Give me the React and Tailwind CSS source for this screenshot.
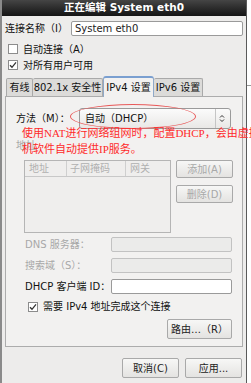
import React from 'react'

const ui = { fontFamily: '"DejaVu Sans", "Noto Sans CJK SC", sans-serif' }
const red = { fontFamily: '"Liberation Serif", "Noto Sans CJK SC", serif' }

function Check({ checked }) {
  return (
    <span className="w-[10px] h-[10px] border border-[#8c8c8c] bg-white flex items-center justify-center shrink-0">
      {checked && (
        <svg width="8" height="8" viewBox="0 0 8 8">
          <path d="M1 4.2 L3 6.3 L7 1.3" fill="none" stroke="#333" strokeWidth="1.3" />
        </svg>
      )}
    </span>
  )
}

function Btn({ children, disabled, className }) {
  return (
    <div
      className={`flex items-center justify-center border border-[#a9a9a9] rounded-[2px] bg-gradient-to-b from-[#f7f7f6] to-[#e4e3e1] text-[10px] ${disabled ? 'text-[#a8a8a8]' : 'text-[#222]'} ${className}`}
    >
      {children}
    </div>
  )
}

function Field({ label, disabled, top }) {
  return (
    <div className={`flex items-center h-[15px] ${top}`}>
      <span className={`w-[105px] shrink-0 pl-[19px] text-[10px] whitespace-nowrap ${disabled ? 'text-[#a8a8a8]' : 'text-[#111]'}`}>{label}</span>
      <div className={`w-[121px] shrink-0 h-[15px] border rounded-[2px] ${disabled ? 'border-[#c2c2c2] bg-[#ebebea]' : 'border-[#9a9a9a] bg-white'}`} />
    </div>
  )
}

export default function App() {
  return (
    <div className="w-[251px] h-[383px] flex bg-white overflow-hidden relative" style={ui}>
      <div className="w-[247px] shrink-0 h-full flex flex-col bg-[#edeceb] border-l-2 border-[#8a8a8a] border-r border-r-[#5a5a5a]">
        {/* title */}
        <div className="h-[16px] bg-gradient-to-b from-[#454545] to-[#151515] text-white text-[10.5px] font-bold flex items-center justify-center">
          正在编辑 System eth0
        </div>

        {/* connection name */}
        <div className="flex items-center mt-[5px] h-[15px] pl-[3px]">
          <span className="w-[66px] shrink-0 text-[10px] text-[#111] whitespace-nowrap">连接名称（I）</span>
          <div className="w-[172px] shrink-0 h-[15px] border border-[#9a9a9a] rounded-[2px] bg-white text-[10px] text-[#222] pl-[3px] leading-[13px]">System eth0</div>
        </div>

        <div className="flex items-center gap-[5px] mt-[7px] pl-[6px] h-[12px] text-[10px] text-[#111]">
          <Check />
          <span>自动连接（A）</span>
        </div>
        <div className="flex items-center gap-[5px] mt-[4px] pl-[6px] h-[12px] text-[10px] text-[#111]">
          <Check checked />
          <span>对所有用户可用</span>
        </div>

        {/* tabs */}
        <div className="flex items-end mt-[5px] pl-[4px] h-[20px] text-[10px] text-[#111]">
          <div className="w-[27px] h-[18px] border border-[#a9a9a9] border-b-0 rounded-t-[2px] bg-[#dcdbd9] flex items-center justify-center">有线</div>
          <div className="w-[70px] h-[18px] border border-[#a9a9a9] border-b-0 border-l-0 rounded-t-[2px] bg-[#dcdbd9] flex items-center justify-center">802.1x 安全性</div>
          <div className="w-[51px] h-[21px] border border-[#8fa9c9] border-b-0 border-t-2 border-t-[#7a9fd0] rounded-t-[3px] bg-[#f2f1f0] flex items-center justify-center relative z-10 -mb-px">IPv4 设置</div>
          <div className="w-[49px] h-[18px] border border-[#a9a9a9] border-b-0 border-l-0 rounded-t-[2px] bg-[#dcdbd9] flex items-center justify-center">IPv6 设置</div>
        </div>

        {/* panel */}
        <div className="ml-[3px] w-[238px] h-[251px] border border-[#acacac] bg-[#f2f1f0] flex flex-col">
          <div className="flex items-center mt-[11px] h-[21px]">
            <span className="w-[73px] shrink-0 pl-[10px] text-[10px] text-[#111] whitespace-nowrap">方法（M）：</span>
            <div className="w-[152px] shrink-0 h-[21px] border border-[#9a9a9a] rounded-[3px] bg-gradient-to-b from-[#fbfbfb] to-[#e9e8e6] flex items-center justify-between px-[5px] text-[10px] text-[#111]">
              <span>自动（DHCP）</span>
              <div className="flex items-center h-full border-l border-[#c5c5c5] pl-[3px]">
                <svg width="6" height="9" viewBox="0 0 6 9">
                  <path d="M1 3.5 L3 1.5 L5 3.5 M1 5.5 L3 7.5 L5 5.5" fill="none" stroke="#333" strokeWidth="1" />
                </svg>
              </div>
            </div>
          </div>

          <div className="mt-[11px] pl-[10px] text-[10px] text-[#a8a8a8] h-[12px] leading-[12px]">地址</div>

          <div className="flex mt-[8px] pl-[18px] gap-[5px]">
            <div className="w-[147px] shrink-0 h-[73px] border border-[#b5b5b5] bg-[#efeeed]">
              <div className="h-[16px] flex items-center border-b border-[#c8c8c8] text-[10px] text-[#b0b0b0]">
                <span className="w-[42px] pl-[4px] border-r border-[#cfcfcf]">地址</span>
                <span className="w-[59px] pl-[3px] border-r border-[#cfcfcf]">子网掩码</span>
                <span className="pl-[4px]">网关</span>
              </div>
            </div>
            <div className="flex flex-col gap-[7px]">
              <Btn disabled className="w-[57px] h-[18px]">添加(A)</Btn>
              <Btn disabled className="w-[57px] h-[18px]">删除(D)</Btn>
            </div>
          </div>

          <Field label="DNS 服务器：" disabled top="mt-[4px]" />
          <Field label="搜索域（S）：" disabled top="mt-[6px]" />
          <Field label="DHCP 客户端 ID：" top="mt-[6px]" />

          <div className="flex items-center gap-[5px] mt-[7px] pl-[22px] h-[11px] text-[10px] text-[#111]">
            <Check checked />
            <span>需要 IPv4 地址完成这个连接</span>
          </div>

          <div className="flex justify-end pr-[10px] mt-[7px]">
            <Btn className="w-[65px] h-[20px]">路由…（R）</Btn>
          </div>
        </div>

        {/* bottom */}
        <div className="flex justify-end gap-[6px] mt-[11px] pr-[4px]">
          <Btn className="w-[57px] h-[20px]">取消(C)</Btn>
          <Btn className="w-[57px] h-[20px]">应用...</Btn>
        </div>
      </div>
      <div className="flex-1 flex flex-col">
        <div className="h-[85px]" />
        <div className="h-[10px] border-t border-[#9a9a9a]" />
      </div>

      {/* annotation over the dialog */}
      <div className="absolute left-[70px] top-[104px] w-[126px] h-[25px] border border-[#e85a5a] rounded-[50%]" />
      <div className="absolute left-[22px] top-[125px] whitespace-nowrap text-[11px] leading-[16px] text-[#ff2a2a] z-20" style={red}>
        使用NAT进行网络组网时，配置DHCP，会由虚拟
        <br />
        机软件自动提供IP服务。
      </div>
    </div>
  )
}
